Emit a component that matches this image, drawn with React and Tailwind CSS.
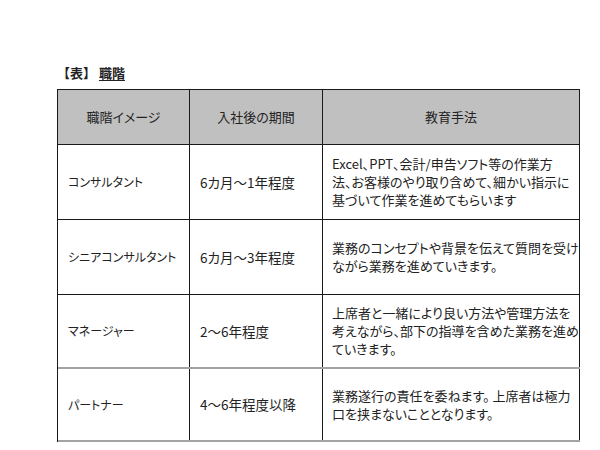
const rows = [
  {
    title: "コンサルタント",
    period: "6カ月～1年程度",
    lines: [
      "Excel、PPT、会計/申告ソフト等の作業方",
      "法、お客様のやり取り含めて、細かい指示に",
      "基づいて作業を進めてもらいます",
    ],
    h: "h-[75px]",
    line: "border-b border-[#1a1a1a]",
  },
  {
    title: "シニアコンサルタント",
    period: "6カ月～3年程度",
    lines: ["業務のコンセプトや背景を伝えて質問を受け", "ながら業務を進めていきます。"],
    h: "h-[75px]",
    line: "border-b border-[#1a1a1a]",
  },
  {
    title: "マネージャー",
    period: "2～6年程度",
    lines: [
      "上席者と一緒により良い方法や管理方法を",
      "考えながら、部下の指導を含めた業務を進め",
      "ていきます。",
    ],
    h: "h-[74px]",
    line: "border-b-2 border-b-[#a3a3a3]",
  },
  {
    title: "パートナー",
    period: "4～6年程度以降",
    lines: ["業務遂行の責任を委ねます。 上席者は極力", "口を挟まないこととなります。"],
    h: "h-[73px]",
    line: "border-b-2 border-b-[#a3a3a3]",
  },
];

export default function App() {
  return (
    <div className="w-[600px] h-[450px] bg-white pt-[64px] pl-[57px] text-[#222] font-['Noto_Sans_CJK_JP','Noto_Sans',sans-serif]">
      {/* TITLE */}
      <p className="h-[18px] text-[13px] leading-[18px] font-bold">
        【表】 <span className="underline underline-offset-2">職階</span>
      </p>

      {/* TABLE */}
      <div className="mt-[7px] w-[523px] border-t border-l border-[#1a1a1a] text-[13px] [font-feature-settings:'palt']">
        <div className="grid grid-cols-[132px_133px_257px] h-[55px] bg-[#c0c0c0] border-b border-[#1a1a1a]">
          <div className="flex items-center justify-center border-r border-[#1a1a1a]">職階イメージ</div>
          <div className="flex items-center justify-center border-r border-[#1a1a1a]">入社後の期間</div>
          <div className="flex items-center justify-center border-r border-[#1a1a1a]">教育手法</div>
        </div>

        {rows.map((r) => (
          <div key={r.title} className={`grid grid-cols-[132px_133px_257px] ${r.h} ${r.line}`}>
            <div className="flex items-center pl-[10px] border-r border-[#1a1a1a] text-[12px]">{r.title}</div>
            <div className="flex items-center pl-[10px] border-r border-[#1a1a1a] text-[13.5px]">{r.period}</div>
            <div className="flex flex-col justify-center pl-[9px] border-r border-[#1a1a1a] leading-[18px] whitespace-nowrap">
              {r.lines.map((l) => (
                <span key={l}>{l}</span>
              ))}
            </div>
          </div>
        ))}
      </div>
    </div>
  );
}
